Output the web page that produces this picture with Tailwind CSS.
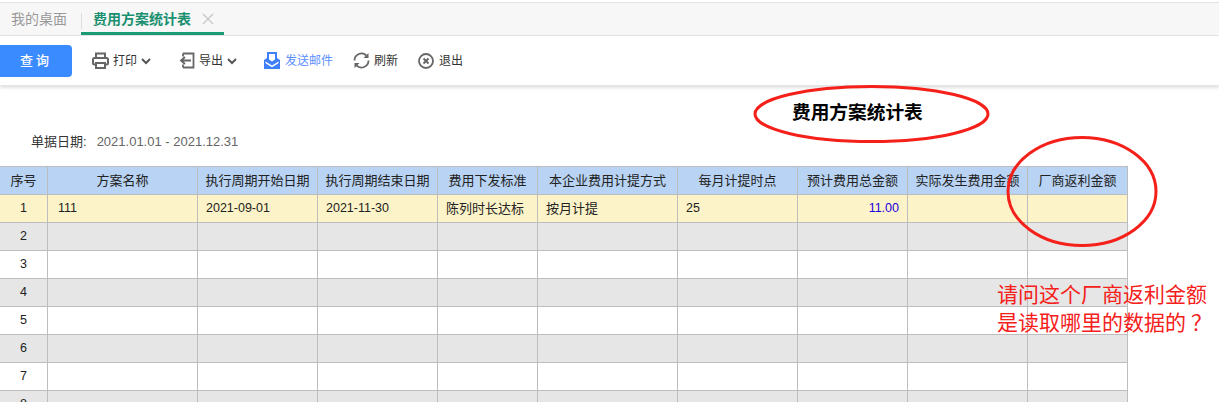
<!DOCTYPE html>
<html lang="zh-CN">
<head>
    <meta charset="UTF-8">
    <title>费用方案统计表</title>
    <script src="https://cdn.jsdelivr.net/npm/@tailwindcss/browser@4"></script>
</head>
<body class="relative h-[402px] overflow-hidden bg-white font-['Liberation_Sans','Noto_Sans_CJK_SC',sans-serif] text-xs text-[#333]">
    <!-- Tabs -->
    <div class="mt-[2px] flex h-[34px] border-y border-[#e3e3e3] bg-[#f7f7f7]">
        <div class="flex h-full w-[81px] items-center pl-[11px] text-[#999]">
            <span class="text-[14px] leading-none">我的桌面</span>
        </div>
        <div class="relative flex h-full w-[143px] items-center gap-[11px] border-b-[3px] border-[#1a9b76] pl-[12px] pt-[3px]">
            <div class="absolute left-0 top-[10px] h-4 w-px bg-[#ddd]"></div>
            <span class="text-[14px] font-bold leading-none text-[#1a9070]">费用方案统计表</span>
            <svg class="h-3 w-3 text-[#c8c8c8]" viewBox="0 0 12 12" fill="none" stroke="currentColor" stroke-width="1.4"><path d="M1 1l10 10M11 1L1 11"/></svg>
        </div>
    </div>

    <!-- Toolbar -->
    <div class="flex h-[50px] items-center border-b border-[#e5e5e5] shadow-[0_2px_3px_rgba(0,0,0,0.12)]">
        <button class="h-[32px] w-[72px] rounded-r-[4px] bg-[#3a8bff] text-[13px] font-medium tracking-[3px] text-white">查询</button>

        <div class="ml-5 flex items-center gap-[4px]">
            <svg class="h-[17px] w-[17px] text-[#666]" viewBox="0 0 17 17" fill="none" stroke="currentColor" stroke-width="2"><path d="M4 6V1.5h9V6"/><rect x="1" y="6" width="15" height="6.5" rx="1.5"/><path d="M4 11h9v5H4z" fill="#fff"/></svg>
            <span>打印</span>
            <svg class="h-2 w-[10px] text-[#555]" viewBox="0 0 10 8" fill="none" stroke="currentColor" stroke-width="2"><path d="M1 2l4 4 4-4"/></svg>
        </div>

        <div class="ml-[28px] flex items-center gap-[4px]">
            <svg class="h-[17px] w-[16px] text-[#666]" viewBox="0 0 16 17" fill="none" stroke="currentColor" stroke-width="1.8"><path d="M4 1.500h10.500v14H4M4 1.500v3M4 15.500v-3M12 8.500H2M6 5l-4 3.500L6 12"/></svg>
            <span>导出</span>
            <svg class="h-2 w-[10px] text-[#555]" viewBox="0 0 10 8" fill="none" stroke="currentColor" stroke-width="2"><path d="M1 2l4 4 4-4"/></svg>
        </div>

        <div class="ml-[27px] flex items-center gap-[5px] text-[#5b8fff]">
            <svg class="h-[17px] w-[16px]" viewBox="0 0 16 17"><path fill="#3f7ff8" d="M3 0h10v6l3 2v9H0V8l3-2z"/><path fill="#fff" d="M5 2h6v5.500L8 9.500 5 7.500zM1.500 9.500L8 13.500l6.500-4v1.800L8 15.200 1.500 11.300z"/></svg>
            <span>发送邮件</span>
        </div>

        <div class="ml-[20px] flex items-center gap-[4px]">
            <svg class="h-[17px] w-[17px] text-[#666]" viewBox="0 0 17 17" fill="none" stroke="currentColor" stroke-width="1.8"><path d="M1.500 8.500A7 7 0 0 1 13.500 3.600M15.500 8.500A7 7 0 0 1 3.500 13.400"/><path fill="currentColor" stroke="none" d="M15.500 1v5h-5zM1.500 16v-5h5z"/></svg>
            <span>刷新</span>
        </div>

        <div class="ml-[20px] flex items-center gap-[5px]">
            <svg class="h-4 w-4 text-[#666]" viewBox="0 0 16 16" fill="none" stroke="currentColor"><circle cx="8" cy="8" r="7" stroke-width="1.8"/><path stroke-width="2" d="M5.500 5.500l5 5M10.500 5.500l-5 5"/></svg>
            <span>退出</span>
        </div>
    </div>

    <!-- Report title and filter -->
    <h1 class="mt-[16px] pl-[792px] text-[18.700px] font-bold leading-[22px] text-black">费用方案统计表</h1>
    <p class="mt-[10px] pl-[31px] text-[13px] leading-4 text-[#666]"><span class="mr-[10px] text-[#333]">单据日期:</span>2021.01.01 - 2021.12.31</p>

    <!-- Table -->
    <table class="mt-[16px] -ml-px w-[1128px] table-fixed border-collapse text-center text-[12.500px] text-[#222] [&_td]:h-[28px] [&_td]:border [&_td]:border-[#bdbdbd] [&_td]:p-0 [&_th]:h-[28px] [&_th]:border [&_th]:border-[#bdbdbd] [&_th]:p-0 [&_th]:text-[13px] [&_th]:font-normal">
        <colgroup>
            <col class="w-[48px]"><col class="w-[150px]"><col class="w-[120px]"><col class="w-[120px]"><col class="w-[100px]"><col class="w-[140px]"><col class="w-[120px]"><col class="w-[110px]"><col class="w-[120px]"><col class="w-[100px]">
        </colgroup>
        <thead class="bg-[#b8d3f3]">
            <tr>
                <th>序号</th><th>方案名称</th><th>执行周期开始日期</th><th>执行周期结束日期</th><th>费用下发标准</th><th>本企业费用计提方式</th><th>每月计提时点</th><th>预计费用总金额</th><th>实际发生费用金额</th><th>厂商返利金额</th>
            </tr>
        </thead>
        <tbody>
            <tr class="bg-[#fdf3c8]">
                <td>1</td>
                <td class="pl-[10px]! text-left">111</td>
                <td class="pl-2! text-left">2021-09-01</td>
                <td class="pl-2! text-left">2021-11-30</td>
                <td class="pl-2! text-left text-[13px]">陈列时长达标</td>
                <td class="pl-2! text-left text-[13px]">按月计提</td>
                <td class="pl-2! text-left">25</td>
                <td class="pr-2! text-right text-[#1a00e0]">11.00</td>
                <td></td><td></td>
            </tr>
            <tr class="bg-[#e6e6e6]"><td>2</td><td></td><td></td><td></td><td></td><td></td><td></td><td></td><td></td><td></td></tr>
            <tr><td>3</td><td></td><td></td><td></td><td></td><td></td><td></td><td></td><td></td><td></td></tr>
            <tr class="bg-[#e6e6e6]"><td>4</td><td></td><td></td><td></td><td></td><td></td><td></td><td></td><td></td><td></td></tr>
            <tr><td>5</td><td></td><td></td><td></td><td></td><td></td><td></td><td></td><td></td><td></td></tr>
            <tr class="bg-[#e6e6e6]"><td>6</td><td></td><td></td><td></td><td></td><td></td><td></td><td></td><td></td><td></td></tr>
            <tr><td>7</td><td></td><td></td><td></td><td></td><td></td><td></td><td></td><td></td><td></td></tr>
            <tr class="bg-[#e6e6e6]"><td>8</td><td></td><td></td><td></td><td></td><td></td><td></td><td></td><td></td><td></td></tr>
        </tbody>
    </table>

    <!-- Red annotations drawn over the screenshot -->
    <svg class="pointer-events-none absolute left-0 top-0 h-[402px] w-[1219px]" viewBox="0 0 1219 402" fill="none" stroke="#f5201a" stroke-width="3">
        <ellipse cx="871.500" cy="114" rx="116.500" ry="27.500"/>
        <ellipse cx="1082" cy="191.500" rx="74" ry="54"/>
    </svg>
    <div class="absolute left-[997px] top-[281px] text-[21px] leading-[28px] text-[#f5201a]">
        <div>请问这个厂商返利金额</div>
        <div>是读取哪里的数据的<span class="ml-[5px]">？</span></div>
    </div>
</body>
</html>
